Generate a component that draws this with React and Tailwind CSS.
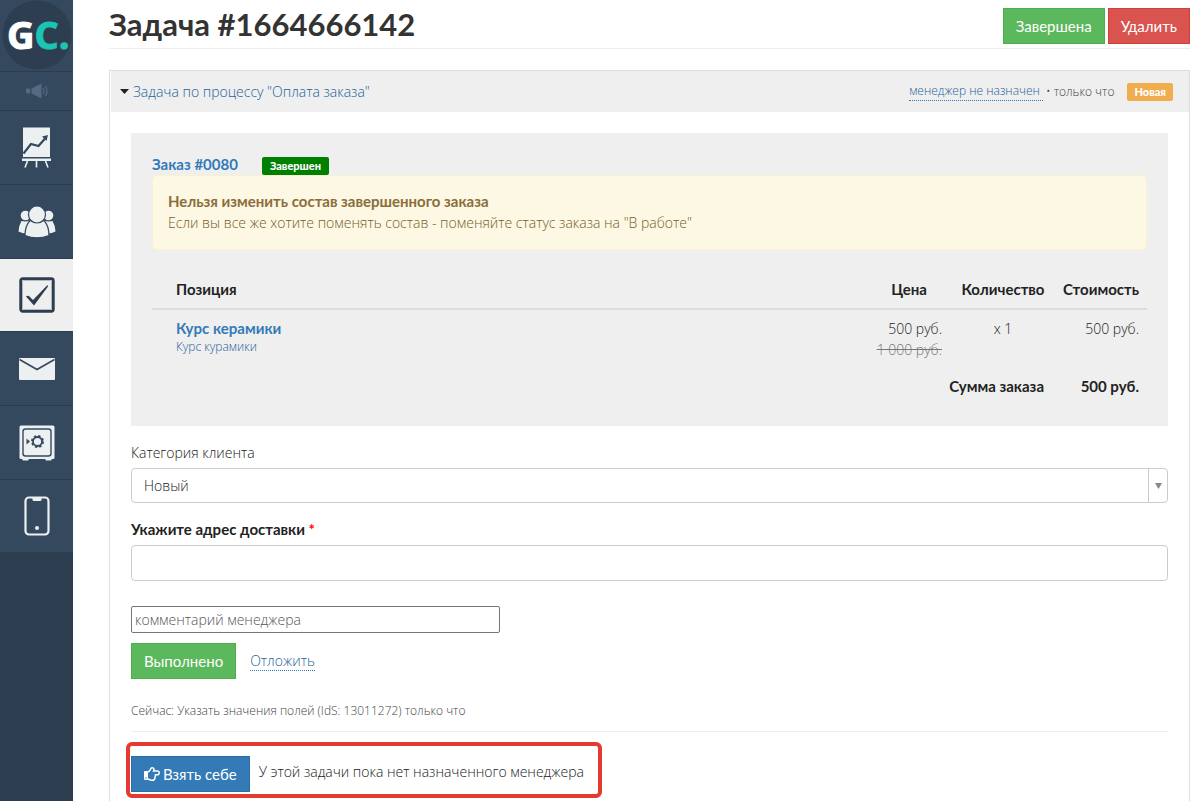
// src/App.jsx
import React from 'react';
import { FaRegHandPointRight } from 'react-icons/fa';

const MegaphoneIcon = () => (
  <svg className="w-6 h-4" viewBox="0 0 24 16" fill="#566b81">
    <rect x="1" y="5.500" width="4" height="5" rx="1" />
    <path d="M6.500 5.500 16.500 0.500v15L6.500 10.500z" />
    <path d="M18 5q2 3 0 6M20.500 3q3 5 0 10" fill="none" stroke="#566b81" strokeWidth="1.200" />
  </svg>
);

const ChartIcon = () => (
  <svg className="w-[30px] h-[42px]" viewBox="0 0 30 42" fill="none">
    <path d="M1 0.500h27V30H1z" fill="#ecf0f1" />
    <path d="M0 31.500h29v2.500H0z" fill="#ecf0f1" />
    <path d="M5.500 34 3 40.500M14.500 34v6.500M23.500 34l2.500 6.500" stroke="#ecf0f1" strokeWidth="1.600" />
    <path d="M1.500 26.500 9 17l7.500 2 7-8" stroke="#34495e" strokeWidth="2.200" />
    <path d="M26 8l-6 1.500 4.500 4.500z" fill="#34495e" />
  </svg>
);

const UsersIcon = () => (
  <svg className="w-[38px] h-8" viewBox="0 0 38 32" fill="#ecf0f1">
    <circle cx="7.500" cy="9.500" r="4.800" />
    <circle cx="30.500" cy="9.500" r="4.800" />
    <path d="M3.500 15q-3 5-3 10.500 3.500 2 8 2L12 14.500q-4 1.500-8.500.5z" />
    <path d="M34.500 15q3 5 3 10.500-3.500 2-8 2L26 14.500q4 1.500 8.500.5z" />
    <g stroke="#34495e" strokeWidth="1.200">
      <path d="M12 14.500q7 4 14 0Q31 20 31 29.500q-12 4.500-24 0 0-9.500 5-15z" />
      <circle cx="19" cy="8.500" r="8.500" />
    </g>
  </svg>
);

const TaskIcon = () => (
  <svg className="w-9 h-9" viewBox="0 0 36 36" fill="none">
    <rect x="1.700" y="1.700" width="32.600" height="32.600" rx="2" stroke="#2c3e50" strokeWidth="2.800" />
    <rect x="3.500" y="3.500" width="29" height="29" rx="1" stroke="#a3adb7" strokeWidth="0.800" />
    <path d="M7 19.500q2-1.500 3.500 0l3.500 3.500L28.500 8 29 9.500 15 28.500z" fill="#2c3e50" />
  </svg>
);

const MailIcon = () => (
  <svg className="w-9 h-[22px]" viewBox="0 0 36 22" fill="none">
    <rect width="36" height="22" rx="1" fill="#ecf0f1" />
    <path d="M0.500 1.500 18 11.500 35.500 1.500" stroke="#34495e" strokeWidth="1.600" />
  </svg>
);

const SafeIcon = () => (
  <svg className="w-9 h-9" viewBox="0 0 36 36" fill="none">
    <path d="M2 0.500h32q1.500 0 1.500 1.500v31q0 1-1.500 1h-1l-1 1.500h-5L26 34H10l-1 1.500H4L3 34H2Q.5 34 .5 33V2Q.5.5 2 .5z" fill="#ecf0f1" />
    <rect x="4" y="4" width="28" height="27" rx="2.500" stroke="#34495e" strokeWidth="1.400" />
    <path d="M7.500 13.500l3.500 3-3.500 3z" fill="#34495e" />
    <circle cx="18.500" cy="16.500" r="4.500" stroke="#34495e" strokeWidth="1.800" />
    <circle cx="18.500" cy="16.500" r="5.600" stroke="#34495e" strokeWidth="1.800" strokeDasharray="2.400 2" />
  </svg>
);

const PhoneIcon = () => (
  <svg className="w-[26px] h-10" viewBox="0 0 26 40" fill="none">
    <rect x="1.500" y="1.500" width="23" height="37" rx="3.500" stroke="#ecf0f1" strokeWidth="2.200" />
    <path d="M8.500 1.500h9V4q0 1-1.500 1h-6Q8.500 5 8.500 4z" fill="#ecf0f1" />
    <circle cx="13" cy="32" r="2" fill="#ecf0f1" />
  </svg>
);

const navItems = [
  { label: 'Объявления', icon: MegaphoneIcon, size: 'h-[39px]' },
  { label: 'Статистика', icon: ChartIcon, size: 'h-[74px]' },
  { label: 'Пользователи', icon: UsersIcon, size: 'h-[74px]' },
  { label: 'Задачи', icon: TaskIcon, size: 'h-[73px]', active: true },
  { label: 'Сообщения', icon: MailIcon, size: 'h-[74px]' },
  { label: 'Продажи', icon: SafeIcon, size: 'h-[74px]' },
  { label: 'Приложение', icon: PhoneIcon, size: 'h-[73px]' }
];

const Sidebar = () => (
  <nav className="w-[73px] shrink-0 bg-[#2c3e50]">
    <a href="#home" aria-label="GetCourse" className="flex items-center justify-center h-[71px] bg-[#34495e]">
      <svg className="w-[71px] h-[71px]" viewBox="0 0 71 71">
        <circle cx="36" cy="35" r="34.500" fill="#2c3e50" />
        <text x="6" y="49" fontFamily="Open Sans, sans-serif" fontWeight="700" fontSize="38" fill="#fff" stroke="#fff">
          G<tspan fill="#1cc4b4" stroke="#1cc4b4">C.</tspan>
        </text>
      </svg>
    </a>
    {navItems.map(({ label, icon: Icon, size, active }) => (
      <a
        key={label}
        href="#nav"
        aria-label={label}
        className={`flex items-center justify-center border-t ${size} ${
          active ? 'bg-[#efefef] border-[#2c3e50]' : 'bg-[#34495e] border-[#2b3e51]'
        }`}
      >
        <Icon />
      </a>
    ))}
  </nav>
);

const OrderBox = () => (
  <section className="bg-[#efefef] p-[21px]">
    <div className="flex items-end gap-6 h-[21px]">
      <a href="#order" className="font-bold text-[#337ab7]">Заказ #0080</a>
      <span className="rounded-xs bg-[#008000] px-2 text-[11px] leading-[18px] font-black text-white">
        Завершен
      </span>
    </div>

    <div className="rounded border border-[#faf2cc] bg-[#fcf8e3] p-[15px] pb-4 mb-[21px] text-[#8a6d3b]">
      <p className="font-bold">Нельзя изменить состав завершенного заказа</p>
      <p className="font-['Open_Sans'] text-sm leading-[21px] font-light text-[#785c2c]">
        Если вы все же хотите поменять состав - поменяйте статус заказа на "В работе"
      </p>
    </div>

    <table className="w-full table-fixed">
      <thead>
        <tr className="border-b-2 border-[#ddd]">
          <th className="py-2 pl-6 text-left">Позиция</th>
          <th className="py-2 w-[90px] text-center">Цена</th>
          <th className="py-2 w-[98px] text-center">Количество</th>
          <th className="py-2 pr-2 w-[95px] text-right">Стоимость</th>
        </tr>
      </thead>
      <tbody>
        <tr className="align-top font-['Open_Sans'] text-sm leading-[21px] font-light">
          <td className="py-2 pl-6">
            <a href="#course" className="block font-[Lato] text-[15px] font-bold text-[#337ab7]">Курс керамики</a>
            <a href="#course" className="block text-xs text-[#23629a]">Курс курамики</a>
          </td>
          <td className="py-2 pr-3 text-right">
            500 руб.
            <s className="block text-[#777]">1 000 руб.</s>
          </td>
          <td className="py-2 text-center">x 1</td>
          <td className="py-2 pr-2 text-right">500 руб.</td>
        </tr>
        <tr className="font-bold">
          <td colSpan={3} className="py-2 pr-2 text-right">Сумма заказа</td>
          <td className="py-2 pr-2 text-right">500 руб.</td>
        </tr>
      </tbody>
    </table>
  </section>
);

const TaskForm = () => (
  <form className="pt-4" onSubmit={(e) => e.preventDefault()}>
    <label htmlFor="category" className="block mb-[5px] font-['Open_Sans'] text-sm leading-[21px] font-light">
      Категория клиента
    </label>
    <div className="relative mb-4">
      <select
        id="category"
        className="block w-full h-[35px] appearance-none rounded border border-[#ccc] bg-white pl-3 pr-8 font-['Open_Sans'] text-sm font-light"
      >
        <option>Новый</option>
      </select>
      <span className="pointer-events-none absolute inset-y-0 right-0 flex w-5 items-center justify-center border-l border-[#ccc]">
        <svg className="w-[7px] h-[6px]" viewBox="0 0 7 6" fill="#888">
          <path d="M0 0h7L3.500 6z" />
        </svg>
      </span>
    </div>

    <label htmlFor="address" className="block mb-[5px] font-bold">
      Укажите адрес доставки <span className="text-[#f00]">*</span>
    </label>
    <input id="address" type="text" className="block w-full h-9 rounded border border-[#ccc] px-3" />

    <input
      type="text"
      aria-label="Комментарий менеджера"
      placeholder="комментарий менеджера"
      className="block mt-[25px] w-[369px] h-[27px] rounded-xs border border-[#767676] px-[3px] font-['Open_Sans'] text-sm font-light placeholder-[#555]"
    />

    <div className="flex items-center gap-[14px] mt-[10px]">
      <button type="submit" className="h-9 border border-[#4cae4c] bg-[#5cb85c] px-3 text-white">
        Выполнено
      </button>
      <a
        href="#later"
        className="border-b border-dotted border-[#337ab7] font-['Open_Sans'] text-sm leading-[18px] font-light text-[#23629a]"
      >
        Отложить
      </a>
    </div>
  </form>
);

const App = () => (
  <div className="flex min-h-screen bg-white font-[Lato,sans-serif] text-[15px] leading-[21px] text-[#222]">
    <Sidebar />

    <main className="flex flex-col flex-1 pl-9 pr-[9px]">
      <header className="flex items-start justify-between h-[49px] border-b border-[#eee]">
        <h1 className="pt-2 text-[31px] leading-8 font-bold text-[#333]">Задача #1664666142</h1>
        <div className="flex gap-[3px] pt-2">
          <button className="h-9 border border-[#4cae4c] bg-[#5cb85c] px-3 text-white">Завершена</button>
          <button className="h-9 border border-[#d43f3a] bg-[#d9534f] px-3 text-white">Удалить</button>
        </div>
      </header>

      <article className="flex-1 mt-[21px] border border-b-0 border-[#ddd]">
        <div className="flex items-center justify-between h-[41px] ml-px bg-[#efefef] pl-[9px] pr-4">
          <a
            href="#task"
            className="flex items-center gap-1 font-['Open_Sans'] text-sm leading-[21px] font-light text-[#23629a]"
          >
            <svg className="w-[9px] h-[5px]" viewBox="0 0 9 5" fill="#222">
              <path d="M0 0h9L4.500 5z" />
            </svg>
            Задача по процессу "Оплата заказа"
          </a>
          <div className="flex items-center font-['Open_Sans'] text-xs font-light text-[#444]">
            <a href="#manager" className="border-b border-dotted border-[#337ab7] pr-[3px] leading-[18px] text-[#23629a]">
              менеджер не назначен
            </a>
            <span className="whitespace-pre"> • только что</span>
            <span className="ml-[13px] rounded-xs bg-[#f0ad4e] px-[7px] font-[Lato] text-[11px] leading-[18px] font-black text-white">
              Новая
            </span>
          </div>
        </div>

        <div className="px-[21px] pt-[21px]">
          <OrderBox />
          <TaskForm />
          <p className="mt-[21px] pb-[10px] border-b border-[#eee] font-['Open_Sans'] text-xs leading-[21px] font-light text-[#444]">
            Сейчас: Указать значения полей (IdS: 13011272) только что
          </p>

          {/* Highlighted assign block */}
          <div className="inline-flex items-center gap-[9px] -ml-[5px] mt-[10px] mb-[3px] h-14 rounded-md border-4 border-[#e53a2f] pl-px pr-[14px] pt-2">
            <button className="flex items-center gap-[3px] h-9 border border-[#2e6da4] bg-[#337ab7] px-3 text-white">
              <FaRegHandPointRight className="w-4 h-4" />
              Взять себе
            </button>
            <span className="pb-1 font-['Open_Sans'] text-sm font-light">
              У этой задачи пока нет назначенного менеджера
            </span>
          </div>
        </div>
      </article>
    </main>
  </div>
);

export default App;
